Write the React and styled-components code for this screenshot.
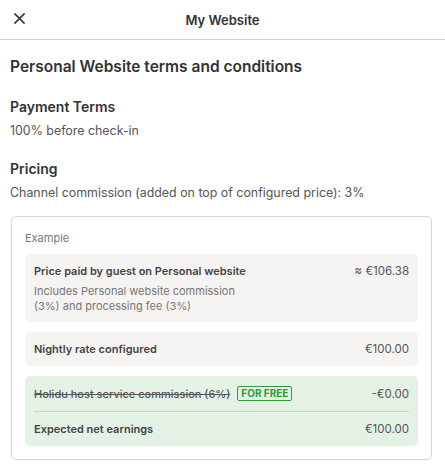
import React from 'react';
import styled, { createGlobalStyle } from 'styled-components';

const GlobalStyle = createGlobalStyle`
  html, body {
    margin: 0;
    padding: 0;
    background: #fff;
    font-family: Inter, "Noto Sans", sans-serif;
    color: #333;
  }
`;

const Page = styled.div`
  width: 445px;
`;

const Header = styled.header`
  height: 39px;
  display: flex;
  align-items: center;
  justify-content: center;
  position: relative;
  border-bottom: 1px solid #cfcfcf;
`;

const CloseButton = styled.button`
  position: absolute;
  left: 8px;
  top: 7px;
  width: 22px;
  height: 22px;
  padding: 0;
  border: 0;
  background: none;
  display: flex;
  align-items: center;
  justify-content: center;
  color: #333;
`;

const HeaderTitle = styled.h1`
  margin: 0;
  font-size: 13px;
  font-weight: 600;
  color: #333;
`;

const Content = styled.main`
  padding: 16px 13px 0 10px;
`;

const Heading = styled.h2`
  margin: 0 0 19px;
  font-size: 15.5px;
  line-height: 22px;
  font-weight: 600;
  color: #333;
`;

const Section = styled.section`
  margin-bottom: 19px;

  &:last-of-type {
    margin-bottom: 14px;
  }
`;

const SectionTitle = styled.h3`
  margin: 0 0 6px;
  font-size: 14px;
  line-height: 19px;
  font-weight: 600;
  color: #333;
`;

const SectionText = styled.p`
  margin: 0;
  font-size: 12.4px;
  line-height: 18px;
  color: #555;
`;

const Card = styled.div`
  margin-left: 1px;
  border: 1px solid #d6d6d6;
  border-radius: 5px;
  padding: 14px 13px 13px;
  display: flex;
  flex-direction: column;
  gap: 10px;
`;

const CardLabel = styled.div`
  font-size: 11px;
  line-height: 14px;
  color: #777;
  margin-bottom: -1px;
`;

const Block = styled.div`
  background: ${(p) => (p.$green ? '#e4f2e5' : '#f5f4f2')};
  border-radius: 5px;
  padding: 0 9px;
`;

const Row = styled.div`
  display: flex;
  align-items: center;
  justify-content: space-between;
  padding: 10px 0;
  font-size: 11px;
  line-height: 14px;

  & + & {
    border-top: 1px solid #c7d6c8;
  }
`;

const RowLabel = styled.span`
  font-weight: 600;
  color: #444;
  display: flex;
  align-items: center;
`;

const RowValue = styled.span`
  font-size: 11.5px;
  color: #555;
`;

const Note = styled.p`
  margin: -4px 0 0;
  padding-bottom: 8px;
  font-size: 11px;
  line-height: 15px;
  color: #777;
`;

const Badge = styled.span`
  margin-left: 7px;
  border: 1px solid #2e9a3a;
  border-radius: 2px;
  padding: 1px 3px;
  font-size: 10px;
  line-height: 11px;
  font-weight: 700;
  color: #2e9a3a;
  display: inline-block;
`;

const Strike = styled.span`
  font-weight: 500;
  color: #555;
  text-decoration: line-through;
`;

function CloseIcon() {
  return (
    <svg width="13" height="13" viewBox="0 0 14 14" fill="none">
      <path d="M2 2l10 10M12 2L2 12" stroke="currentColor" strokeWidth="1.6" strokeLinecap="round" />
    </svg>
  );
}

export default function App() {
  return (
    <Page>
      <GlobalStyle />
      <Header>
        <CloseButton aria-label="Close">
          <CloseIcon />
        </CloseButton>
        <HeaderTitle>My Website</HeaderTitle>
      </Header>
      <Content>
        <Heading>Personal Website terms and conditions</Heading>
        <Section>
          <SectionTitle>Payment Terms</SectionTitle>
          <SectionText>100% before check-in</SectionText>
        </Section>
        <Section>
          <SectionTitle>Pricing</SectionTitle>
          <SectionText>Channel commission (added on top of configured price): 3%</SectionText>
        </Section>
        <Card>
          <CardLabel>Example</CardLabel>
          <Block>
            <Row>
              <RowLabel>Price paid by guest on Personal website</RowLabel>
              <RowValue>≈ €106.38</RowValue>
            </Row>
            <Note>
              Includes Personal website commission
              <br />
              (3%) and processing fee (3%)
            </Note>
          </Block>
          <Block>
            <Row>
              <RowLabel>Nightly rate configured</RowLabel>
              <RowValue>€100.00</RowValue>
            </Row>
          </Block>
          <Block $green>
            <Row>
              <RowLabel>
                <Strike>Holidu host service commission (6%)</Strike>
                <Badge>FOR FREE</Badge>
              </RowLabel>
              <RowValue>-€0.00</RowValue>
            </Row>
            <Row>
              <RowLabel>Expected net earnings</RowLabel>
              <RowValue>€100.00</RowValue>
            </Row>
          </Block>
        </Card>
      </Content>
    </Page>
  );
}
